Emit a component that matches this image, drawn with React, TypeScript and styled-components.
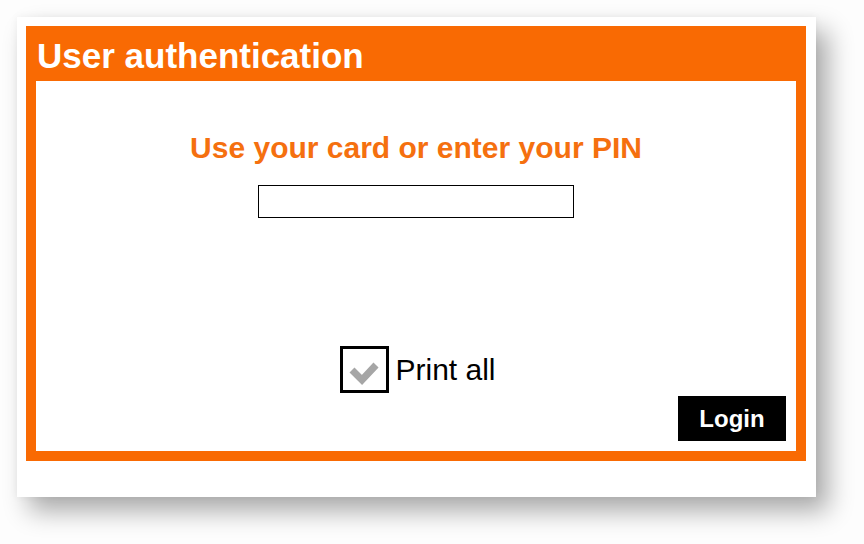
import React from "react";
import styled, { createGlobalStyle } from "styled-components";

const Global = createGlobalStyle`
  html, body { margin: 0; padding: 0; background: #ffffff; }
  body { font-family: "Liberation Sans", Arial, sans-serif; }
`;

const Page = styled.div`
  width: 864px;
  height: 544px;
  padding: 17px 0 0 17px;
  box-sizing: border-box;
  background: #fdfdfd;
`;

const Card = styled.div`
  width: 799px;
  height: 480px;
  box-sizing: border-box;
  padding: 9px 10px 0 9px;
  background: #ffffff;
  box-shadow: 12px 14px 24px rgba(0, 0, 0, 0.33), 0 0 8px rgba(0, 0, 0, 0.05);
`;

const Frame = styled.div`
  width: 780px;
  height: 435px;
  display: flex;
  flex-direction: column;
  background: #f96a03;
  box-sizing: border-box;
  padding: 0 10px 10px 10px;
`;

const Header = styled.div`
  height: 55px;
  box-sizing: border-box;
  padding: 5px 0 0 1px;
  display: flex;
  align-items: center;
  color: #ffffff;
  font-weight: bold;
  font-size: 35px;
`;

const Body = styled.div`
  flex: 1;
  background: #ffffff;
  display: flex;
  flex-direction: column;
  align-items: center;
  padding: 50px 10px 10px 10px;
`;

const Prompt = styled.div`
  color: #f5700f;
  font-weight: bold;
  font-size: 30px;
  line-height: 34px;
`;

const PinInput = styled.input`
  margin-top: 20px;
  width: 316px;
  height: 33px;
  box-sizing: border-box;
  border: 1px solid #000000;
  background: #ffffff;
  padding: 0 4px;
  outline: none;
`;

const CheckRow = styled.label`
  margin-top: 128px;
  margin-left: 4px;
  display: flex;
  align-items: center;
  gap: 6px;
  color: #000000;
  font-size: 30px;
`;

const CheckBox = styled.span`
  width: 49px;
  height: 47px;
  box-sizing: border-box;
  border: 3px solid #000000;
  display: flex;
  align-items: center;
  justify-content: center;
`;

const Footer = styled.div`
  align-self: stretch;
  display: flex;
  justify-content: flex-end;
  margin-top: 3px;
`;

const LoginButton = styled.button`
  width: 108px;
  height: 45px;
  background: #000000;
  color: #ffffff;
  border: none;
  font-family: "Liberation Sans", Arial, sans-serif;
  font-weight: bold;
  font-size: 24px;
  padding: 0;
`;

export default function App() {
  return (
    <>
      <Global />
      <Page>
        <Card>
          <Frame>
            <Header>User authentication</Header>
            <Body>
              <Prompt>Use your card or enter your PIN</Prompt>
              <PinInput type="password" />
              <CheckRow>
                <CheckBox>
                  <svg width="43" height="41" viewBox="0 0 43 41">
                    <polyline
                      points="9,21 19,31 33,16"
                      fill="none"
                      stroke="#a6a6a6"
                      strokeWidth="7"
                    />
                  </svg>
                </CheckBox>
                Print all
              </CheckRow>
              <Footer>
                <LoginButton>Login</LoginButton>
              </Footer>
            </Body>
          </Frame>
        </Card>
      </Page>
    </>
  );
}
